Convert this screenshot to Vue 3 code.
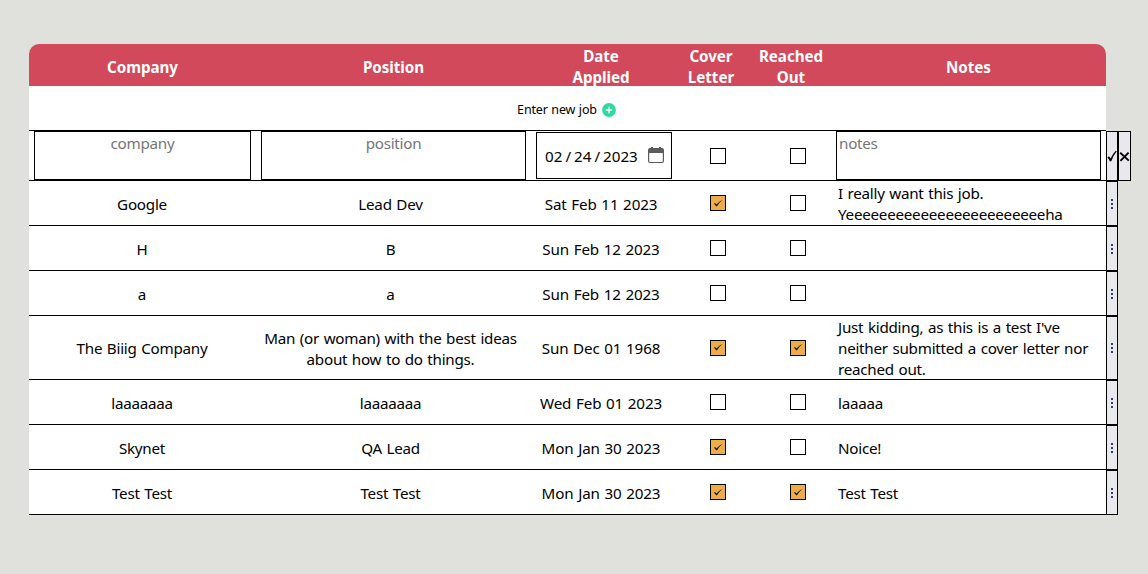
<script setup>
const jobs = [
  { company: 'Google', position: 'Lead Dev', date: 'Sat Feb 11 2023', cover: true, reached: false, notes: ['I really want this job.', 'Yeeeeeeeeeeeeeeeeeeeeeeeeha'] },
  { company: 'H', position: 'B', date: 'Sun Feb 12 2023', cover: false, reached: false, notes: [] },
  { company: 'a', position: 'a', date: 'Sun Feb 12 2023', cover: false, reached: false, notes: [] },
  { company: 'The Biiig Company', position: 'Man (or woman) with the best ideas about how to do things.', date: 'Sun Dec 01 1968', cover: true, reached: true, notes: ["Just kidding, as this is a test I've", 'neither submitted a cover letter nor', 'reached out.'] },
  { company: 'laaaaaaa', position: 'laaaaaaa', date: 'Wed Feb 01 2023', cover: false, reached: false, notes: ['laaaaa'] },
  { company: 'Skynet', position: 'QA Lead', date: 'Mon Jan 30 2023', cover: true, reached: false, notes: ['Noice!'] },
  { company: 'Test Test', position: 'Test Test', date: 'Mon Jan 30 2023', cover: true, reached: true, notes: ['Test Test'] },
]
</script>

<template>
  <main class="tracker">
    <header class="row head">
      <div>Company</div>
      <div>Position</div>
      <div>Date<br />Applied</div>
      <div>Cover<br />Letter</div>
      <div>Reached<br />Out</div>
      <div>Notes</div>
    </header>

    <div class="new-job">
      <span>Enter new job</span>
      <svg width="14" height="14" viewBox="0 0 14 14">
        <circle cx="7" cy="7" r="6.9" fill="#2fd9a0" />
        <path d="M7 3.8v6.4M3.8 7h6.4" stroke="#fff" stroke-width="1.3" />
      </svg>
    </div>

    <div class="row form">
      <div class="field">company</div>
      <div class="field">position</div>
      <div class="date-field">
        <span class="date-text">02<i>/</i>24<i>/</i>2023</span>
        <svg width="16" height="16" viewBox="0 0 16 16">
          <path d="M3 0h2v1h6V0h2v1h1a2 2 0 0 1 2 2v11a2 2 0 0 1-2 2H2a2 2 0 0 1-2-2V3a2 2 0 0 1 2-2h1zM1.2 6v8q0 .9.9.9h11.8q.9 0 .9-.9V6z" fill="#5b5b5e" fill-rule="evenodd" />
        </svg>
      </div>
      <div class="tick"><span class="box"></span></div>
      <div class="tick"><span class="box"></span></div>
      <div class="field notes-field">notes</div>
      <div class="actions">
        <button class="act">
          <svg width="10" height="12" viewBox="0 0 10 12"><path d="M0.4 7.4L2 6.2L3.6 8.4Q5.6 4 8.8 .8L9.8 1.2Q6.4 5.2 4.3 11.2H2.8Q2 8.8.4 7.4z" fill="#000" /></svg>
        </button>
        <button class="act wide">
          <svg width="11" height="11" viewBox="0 0 11 11"><path d="M1.2 1.8L9.8 9.6M9.6 1.6L1.4 9.8" stroke="#000" stroke-width="1.9" /></svg>
        </button>
      </div>
    </div>

    <div v-for="(job, n) in jobs" :key="n" class="row job">
      <div class="text">{{ job.company }}</div>
      <div class="text position">{{ job.position }}</div>
      <div class="text date">{{ job.date }}</div>
      <div v-for="(on, k) in [job.cover, job.reached]" :key="k" class="tick">
        <span class="box" :class="{ on }">
          <svg v-if="on" width="8" height="7" viewBox="0 0 8 7"><path d="M0 3.7L1 3.1L2.5 4.6Q4.6 1.8 7.5 .2L7.8.6Q5 3 3 6.3H2.2Q1.2 4.7 0 3.7z" fill="#1c1206" /></svg>
        </span>
      </div>
      <div class="text notes"><div v-for="line in job.notes" :key="line">{{ line }}</div></div>
      <div class="actions">
        <button class="act dots"><i></i><i></i><i></i></button>
      </div>
    </div>
  </main>
</template>

<style>
body {
  background: #e0e1dc;
}
</style>

<style scoped>
.tracker {
  width: 1077px;
  margin: 44px 0 0 29px;
  font: 15.2px/21px "Noto Sans", "Open Sans", sans-serif;
  letter-spacing: -0.25px;
  word-spacing: 0.9px;
  color: #000;
}
.row {
  display: grid;
  grid-template-columns: 227px 275px 140px 80px 80px 275px;
  position: relative;
  box-sizing: border-box;
  background: #fff;
}
.head {
  height: 42px;
  padding-top: 2px;
  align-items: center;
  text-align: center;
  color: #fff;
  font-weight: 700;
  letter-spacing: -0.05px;
  background: #d1495b;
  border-radius: 10px 10px 0 0;
}
.new-job {
  display: flex;
  align-items: center;
  justify-content: center;
  gap: 5px;
  box-sizing: border-box;
  height: 45px;
  padding: 4px 2px 0 0;
  border-bottom: 1px solid #000;
  background: #fff;
  font-size: 12.5px;
  letter-spacing: -0.15px;
  word-spacing: 0.5px;
}
.new-job span {
  margin-top: -2px;
}
.form {
  height: 50px;
  border-bottom: 1px solid #000;
}
.field {
  height: 49px;
  box-sizing: border-box;
  margin: 0 5px;
  padding-top: 1px;
  border: 1px solid #000;
  color: #757575;
  text-align: center;
}
.notes-field {
  padding-left: 2px;
  text-align: left;
}
.date-field {
  display: flex;
  align-items: center;
  justify-content: space-between;
  box-sizing: border-box;
  width: 136px;
  height: 47px;
  margin: 1px 0 0 5px;
  padding: 0 7px 0 8px;
  border: 1px solid #000;
}
.date-field svg {
  margin-top: -2px;
}
.date-text {
  padding-top: 2px;
  letter-spacing: 0;
}
.date-text i {
  font-style: normal;
  margin: 0 3px;
}
.tick {
  display: flex;
  align-items: center;
  padding: 0 0 0 39px;
}
.form .tick {
  padding-top: 1px;
}
.box {
  display: flex;
  align-items: center;
  justify-content: center;
  box-sizing: border-box;
  width: 16px;
  height: 16px;
  border: 1px solid #000;
  background: #fff;
}
.box.on {
  background: #edae49;
}
.job {
  min-height: 45px;
  align-items: center;
  border-bottom: 1px solid #000;
}
.text {
  text-align: center;
  padding: 2px 1px 0 0;
}
.position {
  width: 269px;
}
.date {
  padding-right: 0;
  letter-spacing: -0.15px;
}
.notes {
  padding: 0 0 0 7px;
  text-align: left;
}
.notes div {
  position: relative;
  top: 1px;
}
.actions {
  display: flex;
  position: absolute;
  left: 100%;
  top: 0;
  bottom: -1px;
}
.act {
  display: flex;
  align-items: center;
  justify-content: center;
  box-sizing: border-box;
  width: 12px;
  padding: 0;
  border: 1px solid #000;
  background: #e9e9ed;
}
.act.wide {
  width: 13px;
}
.dots {
  flex-direction: column;
  gap: 2px;
}
.dots i {
  width: 2px;
  height: 2px;
  background: #27406f;
}
</style>
